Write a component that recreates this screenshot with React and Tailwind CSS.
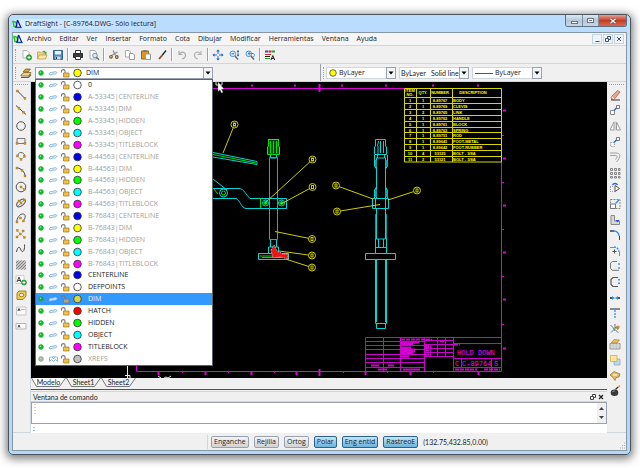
import { useState } from 'react'

const BLUE = '#0000f0'
const YELLOW = '#ffff00'
const GREEN = '#00ff00'
const CYAN = '#00ffff'
const MAGENTA = '#ff00ff'

const xrefLayers = ['A-53345', 'B-44563', 'B-76843'].flatMap(file => [
  { name: `${file}|CENTERLINE`, color: BLUE, dim: true },
  { name: `${file}|DIM`, color: YELLOW, dim: true },
  { name: `${file}|HIDDEN`, color: GREEN, dim: true },
  { name: `${file}|OBJECT`, color: CYAN, dim: true },
  { name: `${file}|TITLEBLOCK`, color: MAGENTA, dim: true }
])

const layers = [
  { name: '0', color: '#ffffff' },
  ...xrefLayers,
  { name: 'CENTERLINE', color: BLUE },
  { name: 'DEFPOINTS', color: '#ffffff' },
  { name: 'DIM', color: YELLOW },
  { name: 'HATCH', color: '#ff0000' },
  { name: 'HIDDEN', color: GREEN },
  { name: 'OBJECT', color: CYAN },
  { name: 'TITLEBLOCK', color: MAGENTA },
  { name: 'XREFS', color: '#c0c0c0', dim: true, off: true }
]

const menus = ['Archivo', 'Editar', 'Ver', 'Insertar', 'Formato', 'Cota', 'Dibujar', 'Modificar', 'Herramientas', 'Ventana', 'Ayuda']

const Svg = ({ children }) => (
  <svg viewBox="0 0 12 12" className="w-3 h-3 shrink-0" fill="none" stroke="#444" strokeWidth="1" aria-hidden="true">
    {children}
  </svg>
)

// small orange node used by the draw tools
const Node = ({ x, y }) => <rect x={x - 1} y={y - 1} width="2" height="2" fill="#d99a1c" stroke="#8a5a10" strokeWidth=".3" />

const Logo = () => (
  <svg viewBox="0 0 10 10" className="w-[10px] h-[10px] shrink-0" fill="none" aria-hidden="true">
    <path d="M1 2.500C4 2 5 5 4.500 8L2 7.500Z" stroke="#12d312" strokeWidth="1.500" />
    <path d="M5.500 1L8.800 8.300H4L5.500 1" stroke="#1414b8" strokeWidth="1.300" />
    <path d="M4 8.800H9.500" stroke="#149090" strokeWidth=".8" />
  </svg>
)

const fileTools = [
  [
    ['Nuevo', <><path d="M3 1.500h4l2 2V9H3z" fill="#fff" stroke="#b5b5b5" /><circle cx="9" cy="8.500" r="2.700" fill="#25a83a" stroke="#118026" strokeWidth=".5" /><path d="M7.500 8.500h3M9 7v3" stroke="#fff" /></>],
    ['Abrir', <><path d="M1.500 3h3l1 1h4v5.500h-8z" fill="#f4d78b" stroke="#c49c45" strokeWidth=".8" /><path d="M3 6h8l-1.500 4h-8z" fill="#ffe9a6" stroke="#b78c34" strokeWidth=".7" /><path d="M6 3c1.500-2 3-1.500 3.500 0l1-.5v3L8 4l1-.4" fill="#35b04a" stroke="none" /></>],
    ['Guardar', <><path d="M1.500 1.500h9v9h-9z" fill="#4c87bd" stroke="#2f6596" /><path d="M3 2h6v3.500H3z" fill="#e8f2fb" stroke="none" /><path d="M3.500 7.500h5v3h-5z" fill="#cfdbe6" stroke="none" /><path d="M4.500 8v2" stroke="#234" /></>]
  ],
  [
    ['Imprimir', <><path d="M3.500 4V1.500h5V4" fill="#fff" stroke="#333" /><path d="M1.500 4.500h9v4h-9z" fill="#3c3f42" stroke="#2a2a2a" /><path d="M3.500 7.500h5v3h-5z" fill="#fff" stroke="#333" /></>],
    ['Vista preliminar', <><path d="M2 1.500h5l1.500 2V10H2z" fill="#fff" stroke="#aaa" /><circle cx="7" cy="6.500" r="2.300" fill="#dbe9f3" stroke="#7c8c99" /><path d="M8.500 8.200l2.500 2.500" stroke="#666" strokeWidth="1.300" /></>]
  ],
  [
    ['Cortar', <><path d="M5 1.500l2.500 5M9.500 3L3.500 6.500" stroke="#8d8d8d" strokeWidth="1.200" /><circle cx="3" cy="7.800" r="1.300" stroke="#81531c" strokeWidth="1.200" /><circle cx="8.800" cy="8" r="1.300" stroke="#81531c" strokeWidth="1.200" /></>],
    ['Copiar', <><path d="M1.500 1.500h3.500l1.500 1.500v5h-5z" fill="#fff" stroke="#aaa" /><path d="M5.500 4.500h3.500l1.500 1.500v4.500h-5z" fill="#fff" stroke="#999" /></>],
    ['Pegar', <><path d="M1.500 2h7v8h-7z" fill="#d69a24" stroke="#96661a" /><path d="M3.500 1h3v2h-3z" fill="#777" stroke="none" /><path d="M5.500 5h5v5.500h-5z" fill="#fff" stroke="#999" /></>],
    ['Copiar propiedades', <><path d="M10 1.500L6 6.500" stroke="#222" strokeWidth="1.300" /><path d="M6 6.500L3 10" stroke="#8a4a1b" strokeWidth="1.800" /></>]
  ],
  [
    ['Deshacer', <path d="M3 2v3.500h3.500M3.500 5c2-3 6-2 6 1.200C9.500 8 8 9.500 6 10" stroke="#a9a9a9" strokeWidth="1.200" />],
    ['Rehacer', <path d="M9 2v3.500H5.500M8.500 5c-2-3-6-2-6 1.200C2.500 8 4 9.500 6 10" stroke="#b5b5b5" strokeWidth="1.200" />]
  ],
  [
    ['Encuadre', <><path d="M6 1.500v9M1.500 6h9" stroke="#2470d8" strokeDasharray="3.500 2" /><path d="M6 .5l1.800 2H4.200zM6 11.500l1.800-2H4.200zM.5 6l2-1.800v3.600zM11.500 6l-2-1.800v3.600z" fill="#1c5fc4" stroke="none" /></>],
    ['Zoom dinámico', <><circle cx="4.800" cy="4.800" r="2.800" fill="#d7ebfa" stroke="#5b94c8" /><path d="M7 7l3 3.500" stroke="#5f6b78" strokeWidth="1.500" /><path d="M3.500 4.800h2.600" stroke="#2470d8" /><path d="M10 1l1.300 1.700H8.700zM10 7.500l1.300-1.700H8.700z" fill="#174f9e" stroke="none" /><path d="M10 2v4.500" stroke="#174f9e" strokeWidth=".7" /></>],
    ['Zoom anterior', <><circle cx="4.800" cy="4.800" r="2.800" fill="#d7ebfa" stroke="#5b94c8" /><path d="M7 7l3 3.500" stroke="#5f6b78" strokeWidth="1.500" /><path d="M4 4.500h5c2 0 2 3 0 3.500M6 2.800L4 4.500l2 1.700" stroke="#3b8fe0" /></>]
  ],
  [
    ['Propiedades', <><path d="M1 2.500h3" stroke="#2050e0" strokeWidth="2" /><path d="M4.500 2.500h3" stroke="#e02020" strokeWidth="2" /><path d="M8 2.500h3" stroke="#20a030" strokeWidth="2" /><path d="M1 5.500h6" stroke="#c22" /><path d="M1 7.500h5" stroke="#222" /><path d="M1 9.500h5" stroke="#2a2" /><path d="M7 11l1.800-4.500L10.700 11M7.800 9.500h2" stroke="#222" /></>]
  ]
]

const drawTools = [
  ['Línea', <><path d="M2.500 2L10 9.500" /><Node x={2.5} y={2} /><Node x={10} y={9.5} /></>],
  ['Línea infinita', <><path d="M1 1.500L11 10.500" /><Node x={4} y={4.2} /><Node x={8.5} y={8.2} /></>],
  ['Círculo', <circle cx="6" cy="6" r="4.300" stroke="#555" />],
  ['Rectángulo', <><path d="M2 3.500h8v5H2z" stroke="#777" /><Node x={2} y={8.5} /><Node x={10} y={8.5} /></>],
  ['Arco', <><path d="M2.500 6C3 1 10 1.500 9.500 6.500" stroke="#666" /><path d="M2.500 6L6 9.500l3.500-3" stroke="#bbb" /><Node x={2.5} y={6} /><Node x={9.5} y={6.5} /><Node x={6} y={9.5} /></>],
  ['Arco de 3 puntos', <><path d="M2 2c4 0 8 4 8 8" /><Node x={2} y={2} /><Node x={7} y={4.5} /><Node x={10} y={10} /></>],
  ['Anillo', <><circle cx="6" cy="6" r="4.800" stroke="#555" /><path d="M6 6l3 2" stroke="#aaa" /><Node x={6} y={6} /><Node x={9.5} y={8.5} /></>],
  ['Elipse', <><ellipse cx="6" cy="6" rx="5" ry="2.700" transform="rotate(-38 6 6)" stroke="#555" /><path d="M3 9l6-6" stroke="#999" /><Node x={6} y={6} /><Node x={4} y={4} /><Node x={9.5} y={3} /></>],
  ['Arco elíptico', <><path d="M2 10.500C1 7 5 1 8.500 2c3 1 1.500 5-.5 7" stroke="#555" /><Node x={5.5} y={6} /><Node x={2} y={10} /><Node x={8.5} y={9} /></>],
  ['Punto', <><path d="M3 3.500l3 3M7 4.500l3-2M2 9l3-3M7 7l3 3" stroke="#bbb" /><Node x={2.5} y={2.5} /><Node x={8} y={3} /><Node x={5.5} y={6} /><Node x={2} y={9} /><Node x={9.5} y={9.5} /></>],
  ['Spline', <path d="M1.500 9c1.500-7 3.500-5 4.500-2s4 2 3.500-5.500" stroke="#444" />],
  ['Trama', <><path d="M1 1.500h10v9H1z" fill="#c4c4c4" stroke="none" /><path d="M1 4l2.500-2.500M1 7l5.500-5.500M1 10l8.500-8.500M3.500 10.500L11 3M6.500 10.500L11 6M9.500 10.500L11 9" stroke="#7d7d7d" strokeWidth=".9" /></>],
  ['Bloque', <><path d="M1 1.500h8v8H1z" fill="#fff" stroke="#ccc" /><path d="M2 8l2-5 2 5M3 6.500h2.500" stroke="#444" /><circle cx="9" cy="8.500" r="2.500" fill="#1fae30" stroke="#0c7e1b" strokeWidth=".5" /><path d="M7.500 8.500h3M9 7v3" stroke="#fff" /></>],
  ['Región', <><path d="M2 4l2-2h7v5l-3 3.500H2z" fill="#f0cb52" stroke="#a98522" /><ellipse cx="6.500" cy="6" rx="2.400" ry="1.700" fill="#f0f0f0" stroke="#a98522" /></>],
  ['Nota', <><path d="M1.500 2h9.500v8H1.500z" fill="#fafafa" stroke="#c5c5c5" /><path d="M3 6l1-2.500L5 6" stroke="#444" /><path d="M6 4.500h4" stroke="#bbb" /></>],
  ['Nota simple', <><path d="M1 3.500h10v5.500H1z" fill="#fdfdfd" stroke="#b5b5b5" /><path d="M3 7.500l1-2.500 1 2.500" stroke="#444" /></>]
]

const modifyTools = [
  ['Suprimir', <><path d="M2 8l6.500-6.500 2.500 1.500-5.500 7-3 .3z" fill="#e8a58e" stroke="#a85840" strokeWidth=".7" /><path d="M2.500 8l2.800 2" stroke="#fff" /><path d="M2 11h9" stroke="#333" /></>],
  ['Copiar', <><path d="M1.500 6.500h4v4h-4z" fill="#fff" stroke="#888" /><path d="M7.500 1.500h3v3h-3z" fill="#fff" stroke="#777" /><path d="M5 6.500l2.500-2.500" stroke="#2860d8" strokeWidth="1.500" /></>],
  ['Simetría', <><path d="M5 2v8H1zM7.500 2v8h4z" fill="#fff" stroke="#9b9b9b" /><path d="M6.200 1v10" stroke="#bbb" strokeWidth=".7" /></>],
  ['Mover', <><path d="M1.500 6.500h4v4h-4z" stroke="#aaa" strokeDasharray="1.500 1" /><path d="M7.500 1.500h3v3h-3z" fill="#fff" stroke="#777" /><path d="M5 6.500l2.500-2.500" stroke="#2860d8" strokeWidth="1.500" /></>],
  ['Equidistancia', <path d="M1 2h6c5 0 5 4 .5 9M1 4.500h5c3 0 2.500 1.500.5 4" stroke="#a1a1a1" />],
  ['Patrón', <path d="M1.500 1.500h2v2h-2zM5.500 1.500h2v2h-2zM9.500 1.500h1.500v2H9.500zM1.500 5.500h2v2h-2zM5.500 5.500h2v2h-2zM9.500 5.500h1.500v2H9.500zM1.500 9.500h2v1.500h-2zM5.500 9.500h2v1.500h-2zM9.500 9.500h1.500v1.500H9.500z" stroke="#777" strokeWidth=".9" />],
  ['Girar', <><path d="M6 3.500L10.500 6.500 6 9.500z" fill="#fff" stroke="#555" /><path d="M1 4.500h4M1 9.500h5M1.500 5v4" stroke="#999" strokeDasharray="1 1" /><path d="M3.500 3c1-2 4-2 5 0" stroke="#2860d8" strokeWidth="1.300" /></>],
  ['Escala', <><path d="M1.500 1.500h9.500v9H1.500z" stroke="#888" strokeDasharray="2 1" /><path d="M1.500 6h5v4.500h-5z" fill="#fff" stroke="#777" /><path d="M6.500 5.500L10 2" stroke="#2f87e8" strokeWidth="1.300" /></>],
  ['Estirar', <><path d="M2 1.500v9h8.500V7H5.500V1.500z" fill="#d9d9d9" stroke="#888" /><path d="M6.500 6h4l-2 2.500z" fill="#1d56d6" stroke="none" /></>],
  ['Chaflán', <><path d="M1 2h4" stroke="#222" strokeWidth="1.300" /><path d="M5 2c3 0 5 2.500 5 5" stroke="#2f8fe8" strokeWidth="1.300" /><path d="M10.500 7v4" stroke="#444" /></>],
  ['Empalme', <><path d="M1 2.500h4M10.500 7v4" stroke="#888" /><path d="M5 2c3 0 5 2.500 5 5" stroke="#2f8fe8" strokeWidth="1.300" strokeDasharray="2 1" /><path d="M3.500 6.500h4M5.500 4.500v4" stroke="#555" /></>],
  ['Partir', <><path d="M8 1.500H3.500L1.500 3v5.500l2 1.800H10" stroke="#777" /><path d="M10 3v2M10 7v2" stroke="#2f8fe8" strokeWidth="1.300" /></>],
  ['Partir en punto', <><path d="M9 1.500H4L2 3.500v5l2 2h5" stroke="#555" strokeWidth="1.200" /><path d="M10 3v1.500M10 6.500v1.500" stroke="#2f8fe8" strokeWidth="1.800" /></>],
  ['Unir', <><path d="M1.500 6h9" stroke="#7ab8f0" /><path d="M3 4l2.500 2L3 8zM9 4L6.500 6 9 8z" fill="#2f8fe8" stroke="none" /><path d="M1 6h2M9 6h2" stroke="#222" strokeWidth="1.300" /></>],
  ['Recortar', <><path d="M1 2h10" stroke="#444" strokeWidth="1.200" /><path d="M6 3v8" stroke="#2f8fe8" strokeWidth="1.300" strokeDasharray="2 1" /></>],
  ['Descomponer', <><path d="M1.500 2l8 8M2 9.500L9 2.500M6 1v4" stroke="#777" /><path d="M6.500 4.500l4-1-1.500 3z" fill="#d99a1c" stroke="#8a5a10" strokeWidth=".5" /><path d="M4 5l2 3" stroke="#36a6c8" /></>],
  ['Editar trama', <><path d="M1 5.500h10V11H1z" fill="#bbb" stroke="#999" /><path d="M1 7h10M1 9h10M3 5v6M6 5v6M9 5v6" stroke="#eee" strokeWidth=".6" /><path d="M2 5l3-3.500 5.500.5L8 5z" fill="#e9bf63" stroke="#a4762a" strokeWidth=".6" /></>],
  ['Orden', <><path d="M5 5h6v6H5z" fill="#c2d7ee" stroke="#8aa2bc" strokeWidth=".7" /><path d="M1.500 1.500h6.500v6H1.500z" fill="#ffe79a" stroke="#c9a44a" strokeWidth=".7" /></>],
  ['Propiedades', <><path d="M1 5l4-3.500 6 2.500-1 3-3 .5-1 3-2-3z" fill="#e6bb66" stroke="#94682a" strokeWidth=".7" /><path d="M4 5h4" stroke="#fff" /></>],
  ['Explotar', <><ellipse cx="5.500" cy="7.800" rx="3.800" ry="3.200" fill="#3a3a3a" stroke="none" /><path d="M6.500 4.500L9 2" stroke="#333" strokeWidth="1.300" /><path d="M9 2.500L11 .5" stroke="#e8871c" strokeWidth="1.300" /><path d="M3.500 7c.5-1 1.500-1.200 2.200-1" stroke="#aaa" /></>]
]

// on/off, frozen, locked and colour marks of a layer
const LayerMarks = ({ color, off, active }) => (
  <svg viewBox="0 0 48 12" className="w-12 h-3 shrink-0" fill="none" aria-hidden="true">
    <circle cx="5" cy="6" r="2.400" fill={off ? '#b5b5b5' : active ? '#2c9b6b' : '#0cc22c'} stroke={off ? '#888' : '#18a030'} strokeWidth=".6" />
    <circle cx="4.500" cy="5.300" r=".7" fill="#a0f0a0" />
    {off ? (
      <path d="M13.500 8.500V4.500c2-1 6-1 8 0v4M13.500 8.500l2-2 2 2 2-2 2 2M16 4l1.500 2L19 4" stroke="#6fa2c8" strokeWidth=".8" />
    ) : (
      <path d="M13 7c1-2.500 3-1 5-2 2-.8 3.500 0 2.500 1.200-1.500 1.600-3 .3-4.500 1.100S13.500 8 13 7z" fill={active ? '#cfe6ff' : '#eef7ff'} stroke={active ? '#a5d0ff' : '#6aa3d8'} strokeWidth=".8" />
    )}
    <path d="M25.500 5.500V4c0-1.800 3.500-1.800 3.500 0v2" stroke="#777" strokeWidth="1.100" />
    <path d="M27.500 6h5.500v4h-5.500z" fill={active ? '#a9a58c' : '#efc04a'} stroke={active ? '#77756b' : '#a47519'} strokeWidth=".7" />
    <circle cx="41.500" cy="6" r="3.800" fill={active ? '#d3d84a' : color} stroke="#333" strokeWidth=".8" />
  </svg>
)

const ToolButton = ({ label, children }) => (
  <button type="button" aria-label={label} title={label} className="w-4 h-full flex items-center justify-center hover:bg-blue-100">
    <Svg>{children}</Svg>
  </button>
)

const Grip = () => <div className="h-3 border-l border-dotted border-gray-400" />

const Arrow = () => (
  <div className="absolute inset-y-0 right-0 w-[10px] pointer-events-none flex items-center justify-center border border-gray-400 bg-gray-100">
    <svg viewBox="0 0 6 4" className="w-[6px] h-[4px]" aria-hidden="true"><path d="M.5.500h5L3 3.500z" fill="#000" /></svg>
  </div>
)

const Balloon = ({ x, y, to }) => (
  <g>
    <path d={`M${x} ${y}L${to[0]} ${to[1]}`} />
    <circle cx={x} cy={y} r="3.500" fill="#000" />
    <rect x={x - 1} y={y - 1.5} width="2" height="3" />
  </g>
)

const partRows = [
  ['1', '1', '8-89767', 'BODY'],
  ['2', '1', '8-89769', 'CLEVIS'],
  ['3', '2', '8-89765', 'LINK'],
  ['4', '1', '8-89762', 'HANDLE'],
  ['5', '1', '8-89761', 'BLOCK'],
  ['6', '1', '8-89763', 'SPRING'],
  ['7', '1', '8-89751', 'ROD'],
  ['8', '1', '8-89641', 'FOOT-METAL'],
  ['9', '1', '8-89642', 'FOOT-RUBBER'],
  ['10', '4', '53125', 'BOLT - 3/8A'],
  ['11', '2', '53121', 'BOLT - 3/8A']
]

const topTicks = [251, 294, 341, 385, 432, 477]
const bottomTicks = [158, 182, 205, 228, 251, 274, 296, 343, 365, 387, 410, 433, 478]
const rightTicks = [110, 135, 158, 182, 205, 229, 252, 276, 299, 324, 348]

const Drawing = () => (
  <svg viewBox="31 82 576 296" className="absolute inset-0 w-full h-full" fill="none" role="img" aria-label="C-89764">
    {/* sheet border */}
    <g stroke="#e000e0">
      <path d="M136.500 88.500H501.500V371.500H136.500Z" />
      <path d="M319.500 84v8M319.500 369v7" strokeWidth="2" />
      {topTicks.map(x => <path key={x} d={`M${x} 85.500h2`} strokeWidth="2" />)}
      {bottomTicks.map((x, i) => <path key={x} d={`M${x + 0.5} 371v${i % 2 ? 2 : 4}`} strokeWidth={i % 2 ? 1 : 2} />)}
      {rightTicks.map((y, i) => <path key={y} d={i % 2 ? `M501 ${y + 0.5}h3` : `M503 ${y + 0.5}h3`} strokeWidth={i % 2 ? 1 : 2} />)}
    </g>

    {/* parts list */}
    <g stroke="#d8d800">
      <path d="M404.500 88.500H501.500V162H404.500ZM416.500 88.500V162M430.500 88.500V162M452.500 88.500V162" />
      {partRows.map((row, i) => <path key={row[0]} d={`M404.500 ${Math.round(97 + i * 5.9) + 0.5}H501.500`} />)}
    </g>
    <g fill="#ffff00" fontFamily="Liberation Sans" fontSize="4" fontWeight="bold" textAnchor="middle">
      <text x="410" y="92">ITEM</text>
      <text x="410" y="96">NO.</text>
      <text x="423" y="94">QTY.</text>
      <text x="440" y="94">NUMBER</text>
      <text x="473" y="94">DESCRIPTION</text>
      {partRows.map((row, i) => (
        <g key={row[0]}>
          <text x="410" y={102 + i * 5.9}>{row[0]}</text>
          <text x="423" y={102 + i * 5.9}>{row[1]}</text>
          <text x="440" y={102 + i * 5.9}>{row[2]}</text>
          <text x="453" y={102 + i * 5.9} textAnchor="start">{row[3]}</text>
        </g>
      ))}
    </g>

    {/* title block */}
    <g stroke="#d000d0">
      <path d="M365.500 337.500H501.500M365.500 337.500V371M383.500 337.500V371M400.500 337.500V371M424.500 337V371M453.500 337V371M365.500 341.500H424M365.500 345.500H424M365.500 349.500H424M365.500 354.500H424M365.500 358.500H424M365.500 362.500H424M365.500 367.500H424" />
      <path d="M424 340.500H453M424 344.500H453M424 348.500H453M424 352.500H453M424 356.500H453M437.500 337V357M445.500 337V357M453 343.500H501M453 358.500H501M453 367.500H501M461.500 358V367M491.500 358V371" />
      <path d="M401 339.500h31M425 345.500h6M425 347.500h6M425 350.500h6M425 354.500h6M440 341.500h4M454 344.500h6M455 369.500h22M484 369.500h16" strokeWidth="2" strokeDasharray="4 1" />
      <path d="M401 342.500h18M401 344.500h12M401 347.500h10M401 349.500h14M401 351.500h14M401 353.500h12M401 356.500h8M371 365.500h8M388 365.500h6M378 369.500h9M403 369.500h17" strokeWidth="2" />
    </g>
    <g fill="#ff00ff" fontFamily="Liberation Mono" fontSize="7">
      <text x="457" y="355">HOLD DOWN</text>
      <text x="455" y="366">C</text>
      <text x="462" y="366">C-89764</text>
      <text x="494" y="366">S</text>
    </g>

    {/* handle and clamp arm */}
    <g stroke="#00d8d8">
      <path d="M213 152.500L257 161.500V164.500L213 157M213 179L227 190M213 188.500H239C244 188.500 246 195 250 198.500H286.500V208.500H246C241 208 240 200 236 198.500H213" />
      <circle cx="223.500" cy="193" r="4" />
      <path d="M270.500 154v4h6v-4M270.500 239v8M276.500 239v8M268.500 247h10v6M268.500 247v6M258.500 253.500h30v6h-30z" />
      <circle cx="265.500" cy="203" r="3" />
      <circle cx="281.500" cy="203" r="3" />
    </g>
    <g stroke="#00e000">
      <path d="M213 154.500L256 163M213 188l5 6M221.500 193a2 2 0 1 0 4 0a2 2 0 1 0-4 0" />
      <path d="M269.500 157.500h8V239.500h-8zM260.500 198v10M260 256h26M262 257.500h20" />
      <path d="M267.500 154.500V147l1-1V139.500h10V146l1 1v7.500z" fill="#004a10" />
      <path d="M270.500 141v12M273.500 141v12M276.500 141v12" />
      <circle cx="265.500" cy="203" r="1.500" fill="#00e000" />
      <circle cx="281.500" cy="203" r="1.500" fill="#00e000" />
    </g>
    <path d="M268 139.500h11M267.500 147v7M279.500 147v7" stroke="#00d8d8" />
    <path d="M271 250l3-5 3 6 6 3 5 0v5l-8-2-7 1z" fill="#e81818" stroke="#ffb0b0" strokeWidth="1" strokeDasharray="1 1" />

    {/* side view */}
    <g stroke="#00d8d8">
      <path d="M374.500 154.500V147l1-1V139.500h10V146l1 1v7.500zM377.500 146l1-5M380.500 141v12M383.500 141v12M378 146v8" />
      <path d="M377.500 154v4h7v-4M376.500 157.500V198M385.500 157.500V198M374.500 155v11l2 3M387.500 155v11l-2 3M374.500 198v-8l2-3M387.500 198v-8l-2-3" />
      <path d="M376 160v7M386.500 160v7M376 189v8M386.500 189v8M376 214v25M386 214v25" strokeWidth="2" stroke="#00a0a8" />
      <path d="M372.500 198.500h16v10h-16zM375.500 198v10M385.500 198v10M376.500 208v31h9v-31M378.500 239v8M383.500 239v8M375.500 239v14M386.500 239v14M376 247.500h10" />
      <path d="M365.500 253.500h30v6h-30zM375.500 259.500h11v64h-11zM376.500 323v5.500h9V323M376.500 260v62M385.500 260v62" />
    </g>

    {/* balloons */}
    <g stroke="#cccc00">
      <Balloon x={234.5} y={124.5} to={[223, 153]} />
      <Balloon x={312.5} y={159.5} to={[265, 203]} />
      <Balloon x={312.5} y={187} to={[281, 204]} />
      <Balloon x={312} y={239} to={[275, 231.5]} />
      <Balloon x={312} y={255.5} to={[279, 251]} />
      <Balloon x={312} y={267.5} to={[287, 259.5]} />
      <Balloon x={336} y={185.5} to={[373, 199]} />
      <Balloon x={337} y={211.5} to={[380, 204.5]} />
      <Balloon x={417} y={190.5} to={[388, 200]} />
    </g>

    {/* axes */}
    <path d="M127.500 364V378M125 375.500h5V378M158 376l3 2M164 378l2-1 2 1 3-2" stroke="#e8e8e8" />
    <path d="M216 81h6v4h-6z" stroke="#ddd" />
    <path d="M218 82l6 7-2.500.2 1.500 3-1.500.8-1.500-3.200-2 1.700z" fill="#fff" stroke="#888" strokeWidth=".4" />
  </svg>
)

const SheetTab = ({ name, active, onClick }) => (
  <button type="button" role="tab" aria-selected={active} onClick={onClick} className="relative w-[35px] h-[9px] leading-[9px] text-center">
    <svg viewBox="0 0 35 9" className="absolute inset-0 w-full h-full" aria-hidden="true">
      <path d="M.5 0L5.500 8.500H28.500L34.500 0" fill={active ? '#fff' : '#f0f0f0'} stroke="#555" strokeWidth=".8" />
    </svg>
    <span className="relative font-['Lato','Open_Sans',sans-serif]">{name}</span>
  </button>
)

const StatusButton = ({ label, on, onClick }) => (
  <button
    type="button"
    aria-pressed={on}
    onClick={onClick}
    className={`h-3 px-[2px] leading-[10px] rounded-xs border ${on ? 'border-[#2c628b] bg-linear-to-b from-[#c4e5f6] to-[#68b3db]' : 'border-gray-400 bg-linear-to-b from-[#f4f4f4] to-[#d2d2d2]'}`}
  >
    {label}
  </button>
)

const App = () => {
  const [layer, setLayer] = useState('DIM')
  const [sheet, setSheet] = useState('Modelo')
  const [command, setCommand] = useState(':')
  const [modes, setModes] = useState({
    Enganche: false,
    Rejilla: false,
    Ortog: false,
    Polar: true,
    'Eng entid': true,
    RastreoE: true
  })

  const current = layers.find(l => l.name === layer)
  const toggle = (key) => setModes({ ...modes, [key]: !modes[key] })

  return (
    <div className="h-screen bg-white pt-[14px] pb-[13px] pl-2 pr-[9px] font-['Open_Sans','Noto_Sans',sans-serif] text-[7px] leading-[10px] text-[#222]">
      <div className="h-full flex flex-col rounded-[5px] border border-[#4d5358] bg-linear-to-b from-[#b9dcff] via-[#d9ecff] via-20% to-[#b3d8fb] to-40% px-[3px] pb-[3px] shadow-[0_2px_8px_2px_rgba(0,0,0,0.5)]">

        {/* Title bar */}
        <header className="h-[17px] shrink-0 flex items-center bg-[#b9dcff]">
          <div className="flex items-center gap-[3px] rounded-full bg-linear-to-r from-[#dceeff] to-transparent">
            <Logo />
            <h1>DraftSight - [C-89764.DWG- Sólo lectura]</h1>
          </div>
          <div className="ml-auto h-full flex items-start">
            <div className="flex h-3 rounded-b-[3px] overflow-hidden border border-t-0 border-[#5e6f80]">
              <button type="button" aria-label="Minimizar" className="w-[17px] flex items-center justify-center border-r border-[#7d8fa1] bg-linear-to-b from-[#dce9f5] via-[#b4c8da] to-[#c3d8ea]">
                <span className="mt-1 w-[7px] h-[3px] border border-gray-500 bg-white" />
              </button>
              <button type="button" aria-label="Maximizar" className="w-[16px] flex items-center justify-center border-r border-[#7d8fa1] bg-linear-to-b from-[#dce9f5] via-[#b4c8da] to-[#c3d8ea]">
                <span className="w-[7px] h-[5px] border border-gray-500 bg-white flex items-center justify-center">
                  <span className="w-[3px] h-px bg-gray-500" />
                </span>
              </button>
              <button type="button" aria-label="Cerrar" className="w-[27px] flex items-center justify-center bg-linear-to-b from-[#e2a090] via-[#c43c24] to-[#d8694e]">
                <svg viewBox="0 0 8 6" className="w-2 h-[6px]" aria-hidden="true"><path d="M1.500 .8l5 4.400M6.500 .8l-5 4.400" stroke="#5a2c28" strokeWidth="2.400" /><path d="M1.500 .8l5 4.400M6.500 .8l-5 4.400" stroke="#fff" strokeWidth="1.500" /></svg>
              </button>
            </div>
          </div>
        </header>

        <div className="flex-1 min-h-0 flex flex-col border border-[#8796a5] bg-[#f0f0f0]">

          {/* Menu bar */}
          <nav className="h-[13px] shrink-0 flex items-center border-b border-gray-300 bg-[#f5f5f5]">
            <Logo />
            <div className="ml-1 flex gap-2">
              {menus.map(m => <button type="button" key={m}>{m}</button>)}
            </div>
            <div className="ml-auto mr-[2px] flex gap-px">
              {[
                ['Minimizar documento', 'M2.500 6.500h4'],
                ['Restaurar documento', 'M3.500 3V1.500h3v3H5M1.500 3.500h3v3h-3z'],
                ['Cerrar documento', 'M2 2l4 4M6 2l-4 4']
              ].map(([label, d]) => (
                <button type="button" key={label} aria-label={label} className="w-[10px] h-[10px] border border-[#c6d4e2] bg-[#edf4fb] flex items-center justify-center">
                  <svg viewBox="0 0 8 8" className="w-2 h-2 shrink-0" fill="none" stroke="#435266" aria-hidden="true"><path d={d} /></svg>
                </button>
              ))}
            </div>
          </nav>

          {/* Standard toolbar */}
          <div className="h-[18px] shrink-0 flex items-center border-b border-gray-300 pl-[2px]">
            <Grip />
            <div className="ml-[2px] flex h-full items-center">
              {fileTools.map((group, i) => (
                <div key={i} className="flex items-center h-full">
                  {i > 0 && <div className="mx-px w-[2px] h-[13px] border-l border-gray-400 bg-white" />}
                  {group.map(([label, icon]) => <ToolButton key={label} label={label}>{icon}</ToolButton>)}
                </div>
              ))}
            </div>
          </div>

          {/* Layer and property bar */}
          <div className="h-[18px] shrink-0 flex border-b border-gray-300">
            <div className="w-[308px] flex items-center border-r border-gray-400 pl-[2px]">
              <Grip />
              <button type="button" aria-label="Administrador de capas" className="w-[19px] flex items-center justify-center">
                <Svg>
                  <path d="M1 8l3-2.500h7L8.500 9H1z" fill="#e9d38d" stroke="#7b632b" strokeWidth=".8" />
                  <path d="M1 10.500h7.500L11 7.500" stroke="#6f5a2b" strokeWidth="1.200" />
                  <path d="M3 5l2.500-3h5L8 5z" fill="#cfa23a" stroke="#7b632b" strokeWidth=".8" />
                </Svg>
              </button>
              <div className="relative w-[178px] h-3">
                <select aria-label="Capa activa" value={layer} onChange={(e) => setLayer(e.target.value)} className="block appearance-none w-full h-3 pl-[50px] leading-[10px] border border-gray-400 bg-white">
                  {layers.map(l => <option key={l.name}>{l.name}</option>)}
                </select>
                <div className="absolute left-px top-0 pointer-events-none"><LayerMarks color={current.color} off={current.off} /></div>
                <Arrow />
                <ul role="listbox" aria-label="Capas" className="absolute z-10 left-0 top-full w-full h-[287px] grid grid-rows-[repeat(24,minmax(0,1fr))] border border-[#59636e] bg-white">
                  {layers.map(l => {
                    const active = l.name === layer
                    return (
                      <li
                        key={l.name}
                        role="option"
                        aria-selected={active}
                        onClick={() => setLayer(l.name)}
                        className={`flex items-center gap-1 ${active ? 'bg-[#3399ff] text-[#f2f2d0]' : l.dim ? 'text-[#a0a0a0]' : ''}`}
                      >
                        <LayerMarks color={l.color} off={l.off} active={active} />
                        {l.name}
                      </li>
                    )
                  })}
                </ul>
              </div>
            </div>
            <div className="flex items-center pl-[2px]">
              <Grip />
              <div className="ml-[2px] flex gap-[3px]">
                <div className="relative w-[70px]">
                  <select aria-label="Color de línea" className="block appearance-none w-full h-3 pl-3 leading-[10px] border border-gray-300 bg-white">
                    <option>ByLayer</option>
                  </select>
                  <svg viewBox="0 0 8 8" className="absolute left-[3px] top-[2px] w-2 h-2 pointer-events-none" aria-hidden="true"><circle cx="4" cy="4" r="3.300" fill={YELLOW} stroke="#444" strokeWidth=".8" /></svg>
                  <Arrow />
                </div>
                <div className="relative w-[70px]">
                  <select aria-label="Estilo de línea" className="block appearance-none w-full h-3 pl-px leading-[10px] border border-gray-300 bg-white font-['Lato','Open_Sans',sans-serif]">
                    <option>{'ByLayer\u00a0\u00a0\u00a0Solid line'}</option>
                  </select>
                  <Arrow />
                </div>
                <div className="relative w-[70px]">
                  <select aria-label="Grosor de línea" className="block appearance-none w-full h-3 pl-[22px] leading-[10px] border border-gray-300 bg-white">
                    <option>ByLayer</option>
                  </select>
                  <div className="absolute left-[3px] top-[6px] w-[18px] border-t border-gray-600 pointer-events-none" />
                  <Arrow />
                </div>
              </div>
            </div>
          </div>

          <div className="flex-1 min-h-0 flex">
            {/* Draw toolbar */}
            <div className="w-[18px] shrink-0 border-r border-b border-gray-300 pt-[2px]">
              <div className="mx-[2px] border-t border-dotted border-gray-400" />
              <div className="mt-[2px] h-[247px] grid grid-rows-[repeat(16,minmax(0,1fr))] justify-start">
                {drawTools.map(([label, icon]) => <ToolButton key={label} label={label}>{icon}</ToolButton>)}
              </div>
            </div>

            <main className="flex-1 min-w-0 flex flex-col">
              <div className="relative flex-1 min-h-0 bg-black">
                <Drawing />
              </div>
              <div role="tablist" className="h-[12px] shrink-0 flex border-b border-gray-600">
                {['Modelo', 'Sheet1', 'Sheet2'].map(name => (
                  <SheetTab key={name} name={name} active={sheet === name} onClick={() => setSheet(name)} />
                ))}
              </div>

              {/* Command window */}
              <section className="h-[43px] shrink-0 flex flex-col pt-px">
                <div className="h-[11px] flex items-center border-y border-gray-300 pl-[2px] pr-[2px]">
                  <h2 className="font-['Lato','Open_Sans',sans-serif]">Ventana de comando</h2>
                  <button type="button" aria-label="Desacoplar" className="ml-auto w-2 h-2">
                    <svg viewBox="0 0 8 8" fill="none" stroke="#444" aria-hidden="true"><path d="M3.500 3V1.500h3v3H5M1.500 3.500h3v3h-3z" /></svg>
                  </button>
                  <button type="button" aria-label="Cerrar panel" className="w-2 h-2">
                    <svg viewBox="0 0 8 8" fill="none" stroke="#222" strokeWidth="1.200" aria-hidden="true"><path d="M2 2l4 4M6 2L2 6" /></svg>
                  </button>
                </div>
                <div className="h-[22px] flex border border-gray-400 bg-white">
                  <textarea readOnly aria-label="Historial de comandos" value={':\n:'} className="flex-1 resize-none overflow-hidden pl-[2px] leading-[6px] text-gray-500" />
                  <div className="w-[9px] bg-[#f0f0f0] flex flex-col justify-between items-center py-1">
                    <svg viewBox="0 0 5 3" className="w-[5px] h-[3px]" aria-hidden="true"><path d="M0 3h5L2.500 0z" fill="#444" /></svg>
                    <svg viewBox="0 0 5 3" className="w-[5px] h-[3px]" aria-hidden="true"><path d="M0 0h5L2.500 3z" fill="#444" /></svg>
                  </div>
                </div>
                <input aria-label="Comando" value={command} onChange={(e) => setCommand(e.target.value)} className="flex-1 min-h-0 bg-white pl-[2px] outline-none" />
              </section>
            </main>

            {/* Modify toolbar */}
            <div className="w-[19px] shrink-0 border-b border-gray-300 pt-[2px]">
              <div className="mx-[2px] border-t border-dotted border-gray-400" />
              <div className="mt-[2px] h-[312px] grid grid-rows-[repeat(20,minmax(0,1fr))] justify-start">
                {modifyTools.map(([label, icon], i) => <ToolButton key={i} label={label}>{icon}</ToolButton>)}
              </div>
            </div>
          </div>

          {/* Status bar */}
          <footer className="h-[17px] shrink-0 flex items-center">
            <div className="ml-[194px] h-[14px] border-l border-gray-300" />
            <div className="ml-[3px] flex items-center gap-[5px]">
              {Object.keys(modes).map(key => (
                <StatusButton key={key} label={key} on={modes[key]} onClick={() => toggle(key)} />
              ))}
              <span className="font-['Lato','Open_Sans',sans-serif]">(132.75,432.85,0.00)</span>
            </div>
            <svg viewBox="0 0 8 8" className="ml-auto mt-2 w-2 h-2" aria-hidden="true">
              <path d="M6 1h1M4 3.500h1M6 3.500h1M2 6h1M4 6h1M6 6h1" stroke="#aaa" />
            </svg>
          </footer>
        </div>
      </div>
    </div>
  )
}

export default App
